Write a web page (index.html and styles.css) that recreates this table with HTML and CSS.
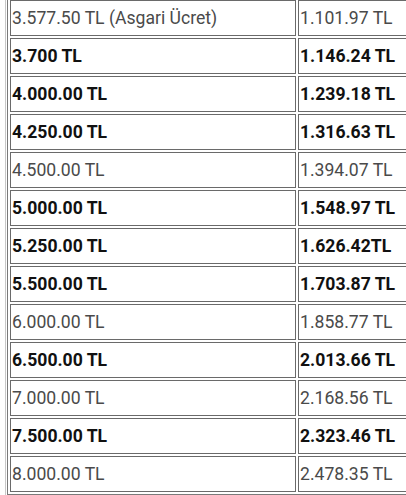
FILE: index.html
```html
<!DOCTYPE html>
<html lang="tr">
<head>
<meta charset="utf-8">
<title>Asgari Ücret Tablosu</title>
<link rel="stylesheet" href="styles.css">
</head>
<body>
<div class="frame">
<table class="wage-table">
<tbody>
<tr><td class="c1">3.577.50 TL (Asgari Ücret)</td><td class="c2">1.101.97 TL</td></tr>
<tr class="b"><td class="c1">3.700 TL</td><td class="c2">1.146.24 TL</td></tr>
<tr class="b"><td class="c1">4.000.00 TL</td><td class="c2">1.239.18 TL</td></tr>
<tr class="b"><td class="c1">4.250.00 TL</td><td class="c2">1.316.63 TL</td></tr>
<tr><td class="c1">4.500.00 TL</td><td class="c2">1.394.07 TL</td></tr>
<tr class="b"><td class="c1">5.000.00 TL</td><td class="c2">1.548.97 TL</td></tr>
<tr class="b"><td class="c1">5.250.00 TL</td><td class="c2">1.626.42TL</td></tr>
<tr class="b"><td class="c1">5.500.00 TL</td><td class="c2">1.703.87 TL</td></tr>
<tr><td class="c1">6.000.00 TL</td><td class="c2">1.858.77 TL</td></tr>
<tr class="b"><td class="c1">6.500.00 TL</td><td class="c2">2.013.66 TL</td></tr>
<tr><td class="c1">7.000.00 TL</td><td class="c2">2.168.56 TL</td></tr>
<tr class="b"><td class="c1">7.500.00 TL</td><td class="c2">2.323.46 TL</td></tr>
<tr><td class="c1">8.000.00 TL</td><td class="c2">2.478.35 TL</td></tr>
</tbody>
</table>
</div>
</body>
</html>
```
FILE: styles.css
```css
html, body {
  margin: 0;
  padding: 0;
  overflow: hidden;
  background: #fff;
}
body {
  font-family: Roboto, "Liberation Sans", sans-serif;
}
.frame {
  margin: -5px 0 0 5px;
  border: 1px solid #c8c8c8;
  padding: 1px;
  width: 460px;
}
.wage-table {
  border: 1px solid #7a7a7a;
  border-collapse: separate;
  border-spacing: 2px;
  width: 100%;
}
.wage-table td {
  border: 1px solid #6a6a6a;
  height: 34px;
  padding: 0 0 0 1px;
  font-size: 17.6px;
  color: #4a4a4a;
  vertical-align: middle;
  white-space: nowrap;
}
.wage-table td.c1 {
  width: 283px;
}
.wage-table tr.b td {
  font-weight: 700;
  color: #111;
}
```
